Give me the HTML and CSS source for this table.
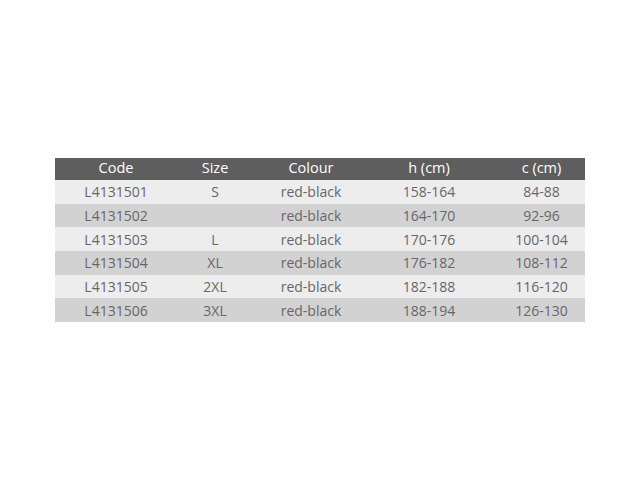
FILE: index.html
```html
<!DOCTYPE html>
<html>
<head>
<meta charset="utf-8">
<link rel="stylesheet" href="styles.css">
</head>
<body>
<div class="page">
<table class="sizes">
<colgroup>
<col class="c-code"><col class="c-size"><col class="c-colour"><col class="c-h"><col class="c-c">
</colgroup>
<thead>
<tr><th>Code</th><th>Size</th><th>Colour</th><th>h (cm)</th><th class="last">c (cm)</th></tr>
</thead>
<tbody>
<tr><td>L4131501</td><td>S</td><td>red-black</td><td>158-164</td><td class="last">84-88</td></tr>
<tr><td>L4131502</td><td></td><td>red-black</td><td>164-170</td><td class="last">92-96</td></tr>
<tr><td>L4131503</td><td>L</td><td>red-black</td><td>170-176</td><td class="last">100-104</td></tr>
<tr><td>L4131504</td><td>XL</td><td>red-black</td><td>176-182</td><td class="last">108-112</td></tr>
<tr><td>L4131505</td><td>2XL</td><td>red-black</td><td>182-188</td><td class="last">116-120</td></tr>
<tr><td>L4131506</td><td>3XL</td><td>red-black</td><td>188-194</td><td class="last">126-130</td></tr>
</tbody>
</table>
</div>
</body>
</html>
```

FILE: styles.css
```css
html, body {
  margin: 0;
  padding: 0;
  background: #ffffff;
}
.page {
  padding: 158px 0 0 55px;
}
.sizes {
  border-collapse: collapse;
  table-layout: fixed;
  width: 530px;
  font-family: "Open Sans", "Liberation Sans", sans-serif;
  font-size: 14px;
}
.c-code { width: 122px; }
.c-size { width: 76px; }
.c-colour { width: 116px; }
.c-h { width: 120px; }
.c-c { width: 96px; }
.sizes th, .sizes td {
  padding: 0;
  text-align: center;
  white-space: nowrap;
}
.sizes th {
  background: #5e5e5e;
  color: #ffffff;
  font-weight: 400;
  height: 19px;
  padding-bottom: 3px;
  font-size: 14.5px;
  line-height: 19px;
}
.sizes td {
  color: #676767;
  height: 23.67px;
}
.sizes .last {
  padding-left: 9px;
}
.sizes tbody tr:nth-child(odd) td {
  background: #ededed;
}
.sizes tbody tr:nth-child(even) td {
  background: #d2d2d2;
}
```
